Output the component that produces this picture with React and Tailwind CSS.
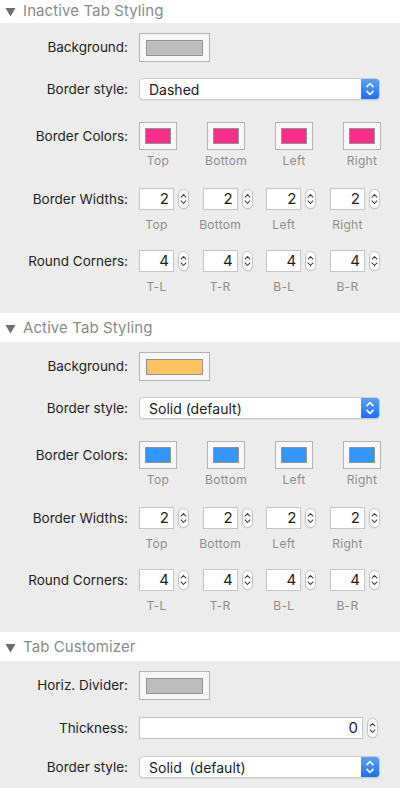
import React from 'react'

const FONT = { fontFamily: 'Inter, "Liberation Sans", sans-serif' }

function Header({ title, first }) {
  return (
    <div className={`flex items-center bg-white pl-[5px] ${first ? 'h-[23px]' : 'h-[29px] pt-[2px]'}`}>
      <svg width="11" height="10" viewBox="0 0 11 10" className="mr-[7px]">
        <path d="M0.5 1 L10.5 1 L5.5 9.5 Z" fill="#6f6f6f" />
      </svg>
      <span className="text-[15px] text-[#8b8b8b] tracking-[0.1px]">{title}</span>
    </div>
  )
}

function Row({ label, children, className = '' }) {
  return (
    <div className={`flex items-center ${className}`}>
      <div className="w-[128px] text-right text-[13.5px] text-[#242424]">{label}</div>
      <div className="ml-[11px] w-[242px]">{children}</div>
    </div>
  )
}

function Well({ color, wide }) {
  return (
    <div
      className={`flex items-center justify-center border border-[#b4b4b4] bg-[#f7f7f7] ${
        wide ? 'w-[71px] h-[29px]' : 'w-[38px] h-[28px]'
      }`}
    >
      <div
        className={`border border-[#939393] ${wide ? 'w-[57px] h-[16px]' : 'w-[26px] h-[16px]'}`}
        style={{ backgroundColor: color }}
      />
    </div>
  )
}

function Chevrons({ stroke, w = 10, h = 20, sw = 1.2 }) {
  return (
    <svg width={w} height={h} viewBox="0 0 10 20">
      <path d="M2.3 7.8 L5 5 L7.7 7.8" fill="none" stroke={stroke} strokeWidth={sw} strokeLinecap="round" strokeLinejoin="round" />
      <path d="M2.3 12.2 L5 15 L7.7 12.2" fill="none" stroke={stroke} strokeWidth={sw} strokeLinecap="round" strokeLinejoin="round" />
    </svg>
  )
}

function Stepper() {
  return (
    <div className="w-[11px] h-[20px] rounded-full border border-[#c4c4c4] bg-white flex items-center justify-center shadow-[0_0.5px_0.5px_rgba(0,0,0,0.08)]">
      <Chevrons stroke="#3a3a3a" w={9} h={18} />
    </div>
  )
}

function NumberField({ value, width = 'w-[35px]' }) {
  return (
    <div className="flex items-center gap-[4px]">
      <div className={`${width} h-[22px] border border-[#c6c6c6] bg-white flex items-center justify-end pr-[4px] text-[15px] text-[#1e1e1e]`}>
        {value}
      </div>
      <Stepper />
    </div>
  )
}

function Select({ value }) {
  return (
    <div className="flex h-[22px] w-[241px] rounded-[4px] border border-[#cbcbcb] bg-white shadow-[0_1px_1px_rgba(0,0,0,0.06)] overflow-hidden">
      <div className="flex-1 flex items-center pl-[9px] text-[14px] text-[#1c1c1c] whitespace-pre">{value}</div>
      <div className="w-[18px] flex items-center justify-center bg-gradient-to-b from-[#5da0fa] to-[#1f6df0]">
        <Chevrons stroke="#ffffff" w={12} h={22} sw={1.5} />
      </div>
    </div>
  )
}

function Sub({ children, className = '' }) {
  return (
    <div className={`text-[12px] leading-[14px] tracking-[0.3px] text-[#8e8e8e] text-center whitespace-nowrap flex justify-center ${className}`}>
      {children}
    </div>
  )
}

function TabSection({ title, bg, style, border, first }) {
  const sides = ['Top', 'Bottom', 'Left', 'Right']
  const corners = ['T-L', 'T-R', 'B-L', 'B-R']
  return (
    <section>
      <Header title={title} first={first} />
      <div className="bg-[#ececec] pt-[10px] pb-[19px]">
        <Row label="Background:">
          <Well color={bg} wide />
        </Row>
        <Row label="Border style:" className="mt-[16px]">
          <Select value={style} />
        </Row>
        <Row label="Border Colors:" className="mt-[22px]">
          <div className="flex justify-between">
            {sides.map((s) => (
              <Well key={s} color={border} />
            ))}
          </div>
        </Row>
        <div className="ml-[139px] w-[242px] mt-[4px] flex justify-between">
          {sides.map((s) => (
            <Sub key={s} className="w-[38px]">
              {s}
            </Sub>
          ))}
        </div>
        <Row label="Border Widths:" className="mt-[20px]">
          <div className="flex justify-between pr-[1px]">
            {sides.map((s) => (
              <NumberField key={s} value="2" />
            ))}
          </div>
        </Row>
        <div className="ml-[139px] w-[242px] mt-[8px] flex justify-between pr-[16px]">
          {sides.map((s) => (
            <Sub key={s} className="w-[35px]">
              {s}
            </Sub>
          ))}
        </div>
        <Row label="Round Corners:" className="mt-[18px]">
          <div className="flex justify-between pr-[1px]">
            {corners.map((s) => (
              <NumberField key={s} value="4" />
            ))}
          </div>
        </Row>
        <div className="ml-[139px] w-[242px] mt-[8px] flex justify-between pr-[16px]">
          {corners.map((s) => (
            <Sub key={s} className="w-[35px]">
              {s}
            </Sub>
          ))}
        </div>
      </div>
    </section>
  )
}

export default function App() {
  return (
    <div className="w-[400px] h-[788px] overflow-hidden bg-[#ececec]" style={FONT}>
      <TabSection first title="Inactive Tab Styling" bg="#bdbdbd" style="Dashed" border="#ff2d87" />
      <TabSection title="Active Tab Styling" bg="#ffc462" style="Solid (default)" border="#3297fd" />
      <section>
        <Header title="Tab Customizer" />
        <div className="bg-[#ececec] pt-[10px]">
          <Row label="Horiz. Divider:">
            <Well color="#bdbdbd" wide />
          </Row>
          <Row label="Thickness:" className="mt-[17px]">
            <NumberField value="0" width="w-[224px]" />
          </Row>
          <Row label="Border style:" className="mt-[17px]">
            <Select value="Solid  (default)" />
          </Row>
        </div>
      </section>
    </div>
  )
}
